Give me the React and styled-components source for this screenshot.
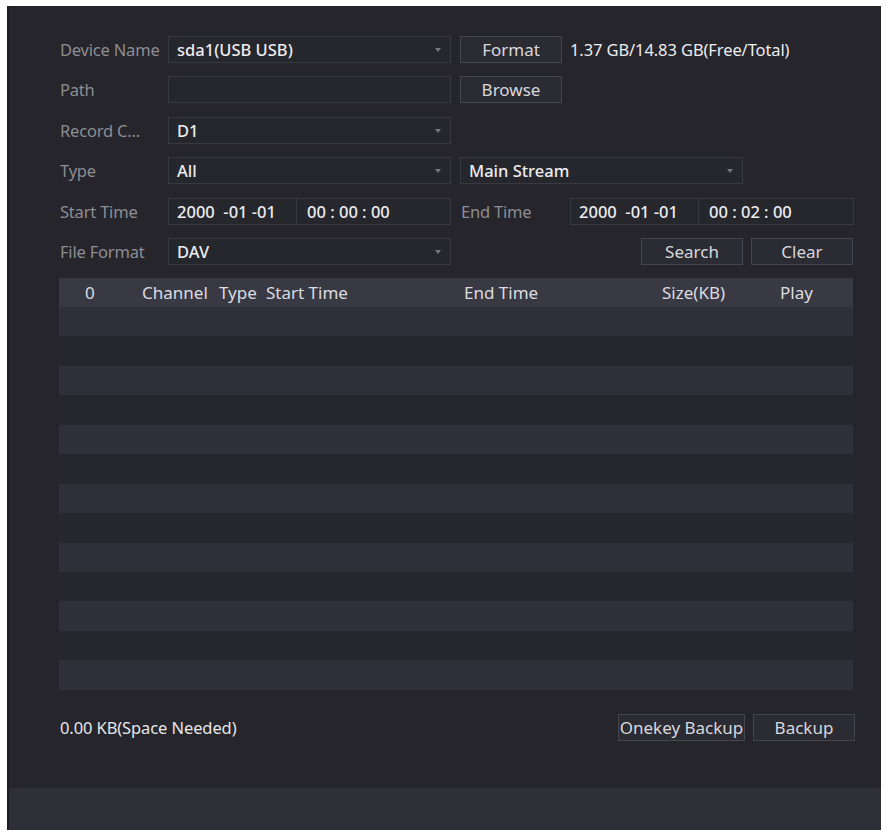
import React from 'react';
import styled, { createGlobalStyle } from 'styled-components';

const GlobalStyle = createGlobalStyle`
  html, body {
    margin: 0;
    padding: 0;
    background: #ffffff;
  }
  body {
    font-family: 'Noto Sans', 'Open Sans', sans-serif;
  }
`;

const Page = styled.div`
  padding: 6px 0 0 7px;
`;

const Panel = styled.div`
  width: 874px;
  height: 824px;
  background: #25252b;
  border-left: 2px solid #1d1d22;
  box-sizing: border-box;
  display: flex;
  flex-direction: column;
`;

const Body = styled.div`
  flex: 1;
  padding: 30px 26px 0 51px;
  display: flex;
  flex-direction: column;
`;

const Form = styled.div`
  display: flex;
  flex-direction: column;
  gap: 13.4px;
`;

const Row = styled.div`
  display: flex;
  align-items: center;
  height: 27px;
`;

const Label = styled.div`
  width: ${p => p.$w || 108}px;
  flex-shrink: 0;
  color: #8d8d94;
  font-size: 16.5px;
  letter-spacing: -0.2px;
  white-space: nowrap;
  overflow: hidden;
`;

const Field = styled.div`
  width: ${p => p.$w || 283}px;
  height: 27px;
  box-sizing: border-box;
  border: 1px solid #393941;
  background: #26262d;
  display: flex;
  align-items: center;
  padding: 0 8px;
  margin-left: ${p => p.$ml || 0}px;
  color: #ececef;
  font-size: 16.5px;
  font-weight: 500;
  position: relative;
  flex-shrink: 0;
  white-space: nowrap;
`;

const Arrow = styled.span`
  position: absolute;
  right: 9px;
  top: 11px;
  width: 0;
  height: 0;
  border-left: 3px solid transparent;
  border-right: 3px solid transparent;
  border-top: 4px solid #77777e;
`;

const TimeField = styled(Field)`
  padding: 0;
`;

const TimePart = styled.div`
  width: ${p => p.$w}px;
  height: 100%;
  display: flex;
  align-items: center;
  box-sizing: border-box;
  padding-left: ${p => p.$pl || 0}px;
  border-right: ${p => (p.$divider ? '1px solid #393941' : 'none')};
  white-space: pre;
`;

const Button = styled.button`
  width: ${p => p.$w || 102}px;
  height: 27px;
  box-sizing: border-box;
  border: 1px solid #45454e;
  background: #2b2b33;
  color: #d8d8dc;
  font-family: inherit;
  font-size: 17px;
  padding: 0;
  margin-left: ${p => p.$ml || 0}px;
  flex-shrink: 0;
  white-space: nowrap;
`;

const Info = styled.div`
  margin-left: 8px;
  color: #ececef;
  font-size: 16.5px;
  letter-spacing: -0.1px;
  white-space: nowrap;
`;

const Table = styled.div`
  margin-top: 13px;
  width: 794px;
  margin-left: -1px;
`;

const cols = '83px 77px 47px 198px 198px 118px 73px';

const HeadRow = styled.div`
  display: grid;
  grid-template-columns: ${cols};
  height: 29px;
  align-items: center;
  background: #393943;
  color: #dcdce0;
  font-size: 17px;
`;

const HeadCell = styled.div`
  padding-left: ${p => p.$pl || 0}px;
  white-space: nowrap;
`;

const DataRow = styled.div`
  height: 29.46px;
  background: ${p => (p.$odd ? '#26262d' : '#30303a')};
`;

const Footer = styled.div`
  display: flex;
  align-items: center;
  margin-top: 24px;
  height: 27px;
`;

const Needed = styled.div`
  flex: 1;
  color: #e6e6ea;
  font-size: 16.5px;
  letter-spacing: -0.1px;
`;

const BottomBar = styled.div`
  height: 42px;
  background: #2f2f38;
`;

const headers = [
  ['0', 26],
  ['Channel', 0],
  ['Type', 0],
  ['Start Time', 0],
  ['End Time', 0],
  ['Size(KB)', 0],
  ['Play', 0],
];

export default function App() {
  return (
    <Page>
      <GlobalStyle />
      <Panel>
        <Body>
          <Form>
            <Row>
              <Label>Device Name</Label>
              <Field>sda1(USB USB)<Arrow /></Field>
              <Button $ml={9}>Format</Button>
              <Info>1.37 GB/14.83 GB(Free/Total)</Info>
            </Row>
            <Row>
              <Label>Path</Label>
              <Field />
              <Button $ml={9}>Browse</Button>
            </Row>
            <Row>
              <Label>Record C...</Label>
              <Field>D1<Arrow /></Field>
            </Row>
            <Row>
              <Label>Type</Label>
              <Field>All<Arrow /></Field>
              <Field $ml={9}>Main Stream<Arrow /></Field>
            </Row>
            <Row>
              <Label>Start Time</Label>
              <TimeField>
                <TimePart $w={128} $pl={8} $divider>2000  -01 -01</TimePart>
                <TimePart $w={150} $pl={10}>00 : 00 : 00</TimePart>
              </TimeField>
              <Label $w={109} style={{ marginLeft: 10 }}>End Time</Label>
              <TimeField $w={284}>
                <TimePart $w={128} $pl={8} $divider>2000  -01 -01</TimePart>
                <TimePart $w={150} $pl={10}>00 : 02 : 00</TimePart>
              </TimeField>
            </Row>
            <Row>
              <Label>File Format</Label>
              <Field>DAV<Arrow /></Field>
              <Button $ml={190}>Search</Button>
              <Button $ml={8}>Clear</Button>
            </Row>
          </Form>

          <Table>
            <HeadRow>
              {headers.map(([t, pl]) => (
                <HeadCell key={t} $pl={pl}>{t}</HeadCell>
              ))}
            </HeadRow>
            {Array.from({ length: 13 }).map((_, i) => (
              <DataRow key={i} $odd={i % 2 === 1} />
            ))}
          </Table>

          <Footer>
            <Needed>0.00 KB(Space Needed)</Needed>
            <Button $w={127}>Onekey Backup</Button>
            <Button $ml={8}>Backup</Button>
          </Footer>
        </Body>
        <BottomBar />
      </Panel>
    </Page>
  );
}
